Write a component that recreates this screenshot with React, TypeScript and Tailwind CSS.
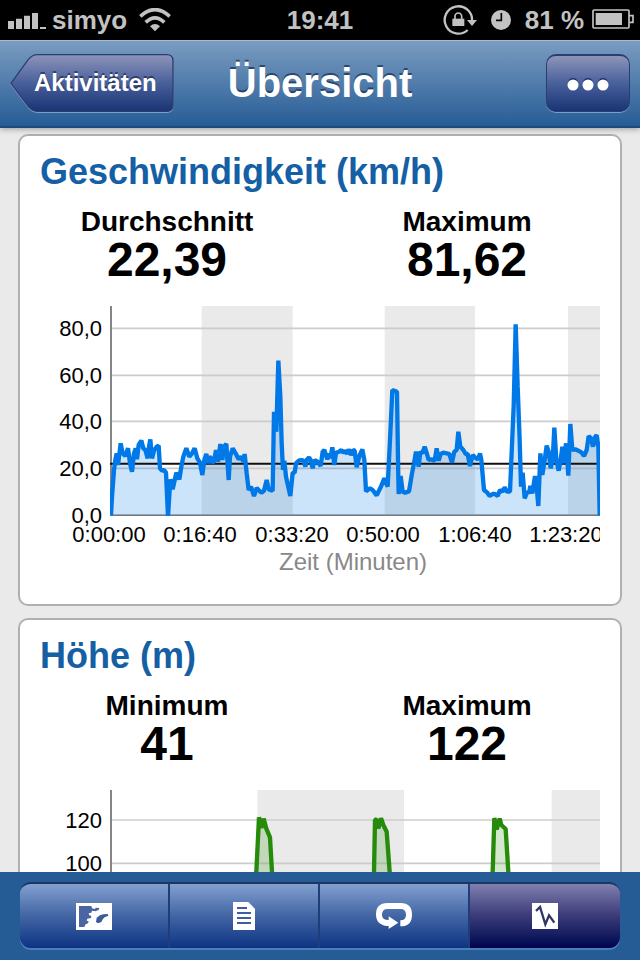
import clsx from "clsx";
import { useState } from "react";

type Band = [start: number, end: number];

interface Tick {
  at: number;
  label: string;
}

interface ChartProps {
  label: string;
  points: string;
  color: string;
  bands: Band[];
  yTicks: Tick[];
  xTicks?: Tick[];
  xTitle?: string;
  average?: number;
}

// plot units, three to a pixel; the plot area is 30..1500 by 18..648
const speedPoints =
  "33,646 36,590 42,510 46,480 50,460 54,495 62,430 68,460 76,468 84,445 90,490 96,515 102,460 107,445 111,478 116,435 124,422 130,445 136,450 143,475 147,440 151,418 156,475 162,452 170,440 176,437 180,505 186,512 192,510 198,518 204,650 211,538 218,568 229,518 238,538 244,500 250,470 259,445 268,470 276,460 284,445 292,475 300,488 307,525 313,480 319,462 325,490 330,468 336,488 342,485 348,450 354,485 361,432 367,480 372,440 379,432 386,540 390,470 398,445 408,462 416,478 424,470 430,485 434,462 440,520 446,570 453,560 462,588 470,564 484,578 492,572 500,540 506,568 518,572 522,335 529,395 535,182 541,290 545,430 549,510 553,482 558,530 " +
  "571,588 578,518 584,518 588,490 596,482 604,480 610,482 616,500 620,480 627,472 632,480 638,505 644,480 652,485 662,498 668,455 673,450 682,478 688,460 691,475 697,442 703,495 708,458 716,456 724,450 730,458 736,452 742,462 746,448 753,465 760,450 764,452 770,502 778,468 787,448 793,480 798,574 810,565 818,570 830,586 842,562 853,535 863,560 870,420 877,270 891,275 894,480 896,582 902,528 908,575 915,578 927,574 936,520 942,490 948,455 956,500 961,455 967,460 974,440 981,462 986,480 994,478 1004,482 1010,445 1016,482 1022,462 1030,458 1040,460 1048,462 1056,488 1063,455 1070,450 1075,395 1081,440 1090,450 1097,462 1103,462 " +
  "1110,498 1118,465 1128,475 1134,478 1140,460 1144,480 1152,570 1162,578 1169,588 1178,582 1185,582 1193,588 1200,570 1208,575 1214,562 1221,575 1230,575 1234,480 1241,320 1247,73 1253,260 1259,420 1263,560 1268,518 1274,595 1282,575 1287,580 1291,558 1297,580 1305,528 1310,560 1315,618 1321,460 1327,525 1334,480 1340,437 1346,455 1352,505 1358,480 1363,383 1369,480 1376,512 1382,480 1387,440 1392,490 1398,430 1402,480 1405,527 1411,372 1417,450 1426,448 1435,452 1444,457 1452,468 1460,450 1466,408 1473,415 1479,440 1485,412 1490,405 1495,440 1499,646";

const heightPoints =
  "33,580 200,560 440,570 460,400 469,264 477,100 484,132 491,104 499,134 510,160 516,264 522,400 540,560 700,575 800,560 816,400 822,264 825,108 830,106 835,133 843,103 850,123 860,143 869,264 875,400 890,560 1100,570 1172,400 1178,264 1183,102 1190,136 1199,104 1204,123 1217,135 1225,264 1231,400 1250,560 1499,575";

const Chart: React.FC<ChartProps> = (props) => {
  return (
    <svg
      viewBox="0 0 560 280"
      className="block w-full text-[22px]"
      role="img"
      aria-label={props.label}
    >
      <svg x="70" y="4" width="490" height="210" viewBox="30 18 1470 630">
        {props.bands.map(([start, end]) => (
          <rect
            key={start}
            x={start}
            y="18"
            width={end - start}
            height="630"
            fill="#eaeaea"
          />
        ))}
        {props.yTicks.map((tick) => (
          <path
            key={tick.at}
            d={`M30 ${tick.at}H1500`}
            stroke="#cccccc"
            strokeWidth="5"
          />
        ))}
        <polygon
          points={`33,646 ${props.points} 1499,646`}
          fill={props.color}
          fillOpacity="0.2"
        />
        <path d="M33 18V648" stroke="#858585" strokeWidth="6" />
        <path d="M30 646H1500" stroke="#6f7a85" strokeWidth="5" />
        {props.average && (
          <path d={`M30 ${props.average}H1500`} stroke="#111" strokeWidth="6" />
        )}
        <polyline
          points={props.points}
          fill="none"
          stroke={props.color}
          strokeWidth="13"
          strokeLinejoin="bevel"
        />
      </svg>
      {props.yTicks.map((tick) => (
        <text
          key={tick.label}
          x="62"
          y={Math.round(tick.at / 3) + 6}
          textAnchor="end"
        >
          {tick.label}
        </text>
      ))}
      {props.xTicks?.map((tick) => (
        <text key={tick.label} x={tick.at} y="240" textAnchor="middle">
          {tick.label}
        </text>
      ))}
      {props.xTitle && (
        <text x="313" y="268" textAnchor="middle" fontSize="24" fill="#888888">
          {props.xTitle}
        </text>
      )}
    </svg>
  );
};

interface CardProps {
  title: string;
  stats: { name: string; value: string }[];
  children: React.ReactNode;
}

const Card: React.FC<CardProps> = ({ title, stats, children }) => (
  <section className="rounded-[10px] border-2 border-[#b0b0b0] bg-white pt-4 pb-[22px]">
    <h2 className="px-5 text-4xl leading-10 font-bold text-[#155fa5]">
      {title}
    </h2>
    <dl className="mt-4 grid grid-cols-[49%_51%] text-center font-bold">
      {stats.map((stat) => (
        <div key={stat.name}>
          <dt className="text-[28px] leading-7">{stat.name}</dt>
          <dd className="text-5xl leading-12">{stat.value}</dd>
        </div>
      ))}
    </dl>
    <div className="mt-[18px] px-5">{children}</div>
  </section>
);

const StatusBar = () => (
  <div className="grid h-10 shrink-0 grid-cols-[1fr_auto_1fr] items-center bg-black px-[6px] text-[26px] leading-10 font-bold text-[#c2c2c2]">
    <div className="flex items-center">
      <svg width="38" height="16" viewBox="0 0 114 48" className="mt-0.5 ml-0.5" fill="currentColor">
        <path d="M0 24h18v24H0zM24 17h18v31H24zM48 8h18v40H48zM72 0h18v48H72zM96 42h18v6H96z" />
      </svg>
      <span className="ml-[6px]">simyo</span>
      <svg width="32" height="24" viewBox="0 0 96 72" className="ml-3" fill="none" stroke="currentColor" strokeWidth="11">
        <path d="M4 25Q48 -15 92 25" />
        <path d="M20 43Q48 16 76 43" />
        <path d="M48 70 33 55Q48 41 63 55Z" fill="currentColor" stroke="none" />
      </svg>
    </div>
    <span>19:41</span>
    <div className="flex items-center justify-end">
      <svg width="34" height="30" viewBox="0 0 102 90" fill="currentColor">
        <path d="M74 75A41 41 0 1 1 87 48" fill="none" stroke="currentColor" strokeWidth="7" />
        <path d="M72 45h30L87 63z" />
        <path d="M28 41h36v22H28z" />
        <path d="M36 42v-8a10 10 0 0 1 20 0v8" fill="none" stroke="currentColor" strokeWidth="5" />
      </svg>
      <svg width="20" height="20" viewBox="0 0 60 60" className="ml-[14px]">
        <circle cx="30" cy="30" r="30" fill="currentColor" />
        <path d="M31 9v22H15" fill="none" stroke="#000" strokeWidth="5" />
      </svg>
      <span className="ml-[14px]">81 %</span>
      <svg width="42" height="20" viewBox="0 0 126 60" className="-mt-0.5 ml-2" fill="currentColor">
        <rect x="3" y="3" width="108" height="54" rx="3" fill="none" stroke="currentColor" strokeWidth="5" />
        <path d="M11 12h79v36H11z" />
        <path d="M112 20h11v20h-11" fill="none" stroke="currentColor" strokeWidth="5" />
      </svg>
    </div>
  </div>
);

const Header = () => (
  <header className="relative z-10 grid h-22 shrink-0 grid-cols-[1fr_auto_1fr] items-center border-t border-b-2 border-t-[#a5bcd3] border-b-[#1f4a7b] bg-linear-to-b from-[#7a9cc0] to-[#255c96] px-[10px] pb-0.5 font-bold text-white shadow-[0_1px_6px_rgba(0,0,0,0.35)]">
    <button
      type="button"
      className="relative h-[58px] w-[164px] justify-self-start pr-[18px] pl-6 text-2xl text-shadow-[0_-2px_0_rgba(20,30,70,0.6)]"
    >
      <svg className="absolute inset-0" width="164" height="60" viewBox="0 0 492 180">
        <defs>
          <linearGradient id="back" x1="0" y1="0" x2="0" y2="1">
            <stop offset="0" stopColor="#8e94b9" />
            <stop offset="0.5" stopColor="#48609b" />
            <stop offset="1" stopColor="#1a3374" />
          </linearGradient>
        </defs>
        <path
          d="M3 91 55 18Q68 3 82 3H470Q489 3 489 22V157Q489 175 470 175H82Q68 175 55 161Z"
          fill="none"
          stroke="#7c9dc6"
          strokeWidth="4"
        />
        <path
          d="M3 88 55 16Q68 2 82 2H470Q489 2 489 20V153Q489 172 470 172H82Q68 172 55 158Z"
          fill="url(#back)"
          stroke="#293f72"
          strokeWidth="4"
        />
      </svg>
      <span className="relative">Aktivitäten</span>
    </button>
    <h1 className="text-[40px] leading-11 text-shadow-[0_-2px_0_rgba(20,45,80,0.7)]">
      Übersicht
    </h1>
    <button
      type="button"
      aria-label="Mehr"
      className="flex h-[58px] w-[84px] items-center justify-center justify-self-end rounded-[10px] border border-t-2 border-[#293f72] bg-linear-to-b from-[#8e94b9] via-[#48609b] to-[#1a3374] pt-0.5 shadow-[0_1px_0_#7c9dc6]"
    >
      <svg width="42" height="14" viewBox="0 0 42 14">
        <g fill="#22305f">
          <circle cx="6" cy="6" r="5" />
          <circle cx="21" cy="6" r="5" />
          <circle cx="36" cy="6" r="5" />
        </g>
        <g fill="#fff">
          <circle cx="6" cy="8" r="5.5" />
          <circle cx="21" cy="8" r="5.5" />
          <circle cx="36" cy="8" r="5.5" />
        </g>
      </svg>
    </button>
  </header>
);

const MapIcon = () => (
  <svg width="36" height="27" viewBox="0 0 108 81">
    <path d="M0 0h108v81H0z" fill="#fff" />
    <path
      d="M9 9H46L48 16 56 18 60 14 70 15 68 21 58 25 48 23 46 29 38 31 40 37 46 39 45 45 34 47 32 53 38 55 36 61 29 64 25 72H9Z"
      fill="#4a65a2"
    />
    <path
      d="M60 57 62 44 72 37 82 34 95 33 97 38 86 43 80 49 76 57 66 61Z"
      fill="#3b5a9b"
    />
  </svg>
);

const DocumentIcon = () => (
  <svg width="22" height="28" viewBox="0 0 66 84">
    <path d="M0 0H46L66 20V84H0Z" fill="#fff" />
    <path
      d="M12 18H42M12 33H54M12 48H54M12 63H54"
      stroke="#3f5c9c"
      strokeWidth="6"
    />
  </svg>
);

const LapIcon = () => (
  <svg width="36" height="26" viewBox="0 0 108 78">
    <path
      d="M73 61Q99 61 99 35T74 9H34Q9 9 9 35T42 60"
      fill="none"
      stroke="#fff"
      strokeWidth="18"
    />
    <path d="M38 40 67 59 38 78Z" fill="#fff" />
  </svg>
);

const GraphIcon = () => (
  <svg width="26" height="26" viewBox="0 0 78 78">
    <path d="M0 0h78v78H0z" fill="#fff" />
    <path
      d="M12 24 24 12 40 64 51 37 67 59"
      fill="none"
      stroke="#343366"
      strokeWidth="7"
    />
  </svg>
);

const tabs = [
  { name: "Karte", Icon: MapIcon },
  { name: "Details", Icon: DocumentIcon },
  { name: "Runden", Icon: LapIcon },
  { name: "Diagramme", Icon: GraphIcon },
];

const TabBar = () => {
  const [active, setActive] = useState("Diagramme");
  return (
    <nav className="h-22 shrink-0 bg-[#255c95] px-5 pt-[10px] pb-3">
      <div className="grid h-full grid-cols-4 overflow-hidden rounded-[11px] border-t-2 border-[#1d3561] shadow-[0_2px_0_#4c7fb3]">
        {tabs.map(({ name, Icon }) => (
          <button
            key={name}
            type="button"
            aria-label={name}
            aria-pressed={active === name}
            onClick={() => setActive(name)}
            className={clsx(
              "flex items-center justify-center border-r-2 border-[#1f3d78] bg-linear-to-b last:border-r-0",
              active === name
                ? "from-[#8280b0] via-[#3b3a78] to-[#02024f]"
                : "from-[#83a0cf] via-[#4265a4] to-[#0c3383]"
            )}
          >
            <Icon />
          </button>
        ))}
      </div>
    </nav>
  );
};

export default function App() {
  return (
    <div className="flex h-screen flex-col bg-[#eaeaea] font-['Liberation_Sans',Arial,sans-serif] text-black">
      <StatusBar />
      <Header />
      <main className="flex min-h-0 flex-1 flex-col gap-3 overflow-y-auto px-[18px] pt-[6px] pb-3 [scrollbar-width:none]">
        <Card
          title="Geschwindigkeit (km/h)"
          stats={[
            { name: "Durchschnitt", value: "22,39" },
            { name: "Maximum", value: "81,62" },
          ]}
        >
          <Chart
            label="Geschwindigkeit"
            points={speedPoints}
            color="#0078e7"
            average={491}
            bands={[
              [305, 578],
              [854, 1125],
              [1404, 1500],
            ]}
            yTicks={[
              { at: 85, label: "80,0" },
              { at: 226, label: "60,0" },
              { at: 364, label: "40,0" },
              { at: 505, label: "20,0" },
              { at: 646, label: "0,0" },
            ]}
            xTicks={[
              { at: 69, label: "0:00:00" },
              { at: 160, label: "0:16:40" },
              { at: 252, label: "0:33:20" },
              { at: 343, label: "0:50:00" },
              { at: 435, label: "1:06:40" },
              { at: 526, label: "1:23:20" },
            ]}
            xTitle="Zeit (Minuten)"
          />
        </Card>
        <Card
          title="Höhe (m)"
          stats={[
            { name: "Minimum", value: "41" },
            { name: "Maximum", value: "122" },
          ]}
        >
          <Chart
            label="Höhe"
            points={heightPoints}
            color="#268a0a"
            bands={[
              [472, 912],
              [1355, 1500],
            ]}
            yTicks={[
              { at: 108, label: "120" },
              { at: 238, label: "100" },
            ]}
          />
        </Card>
      </main>
      <TabBar />
    </div>
  );
}
